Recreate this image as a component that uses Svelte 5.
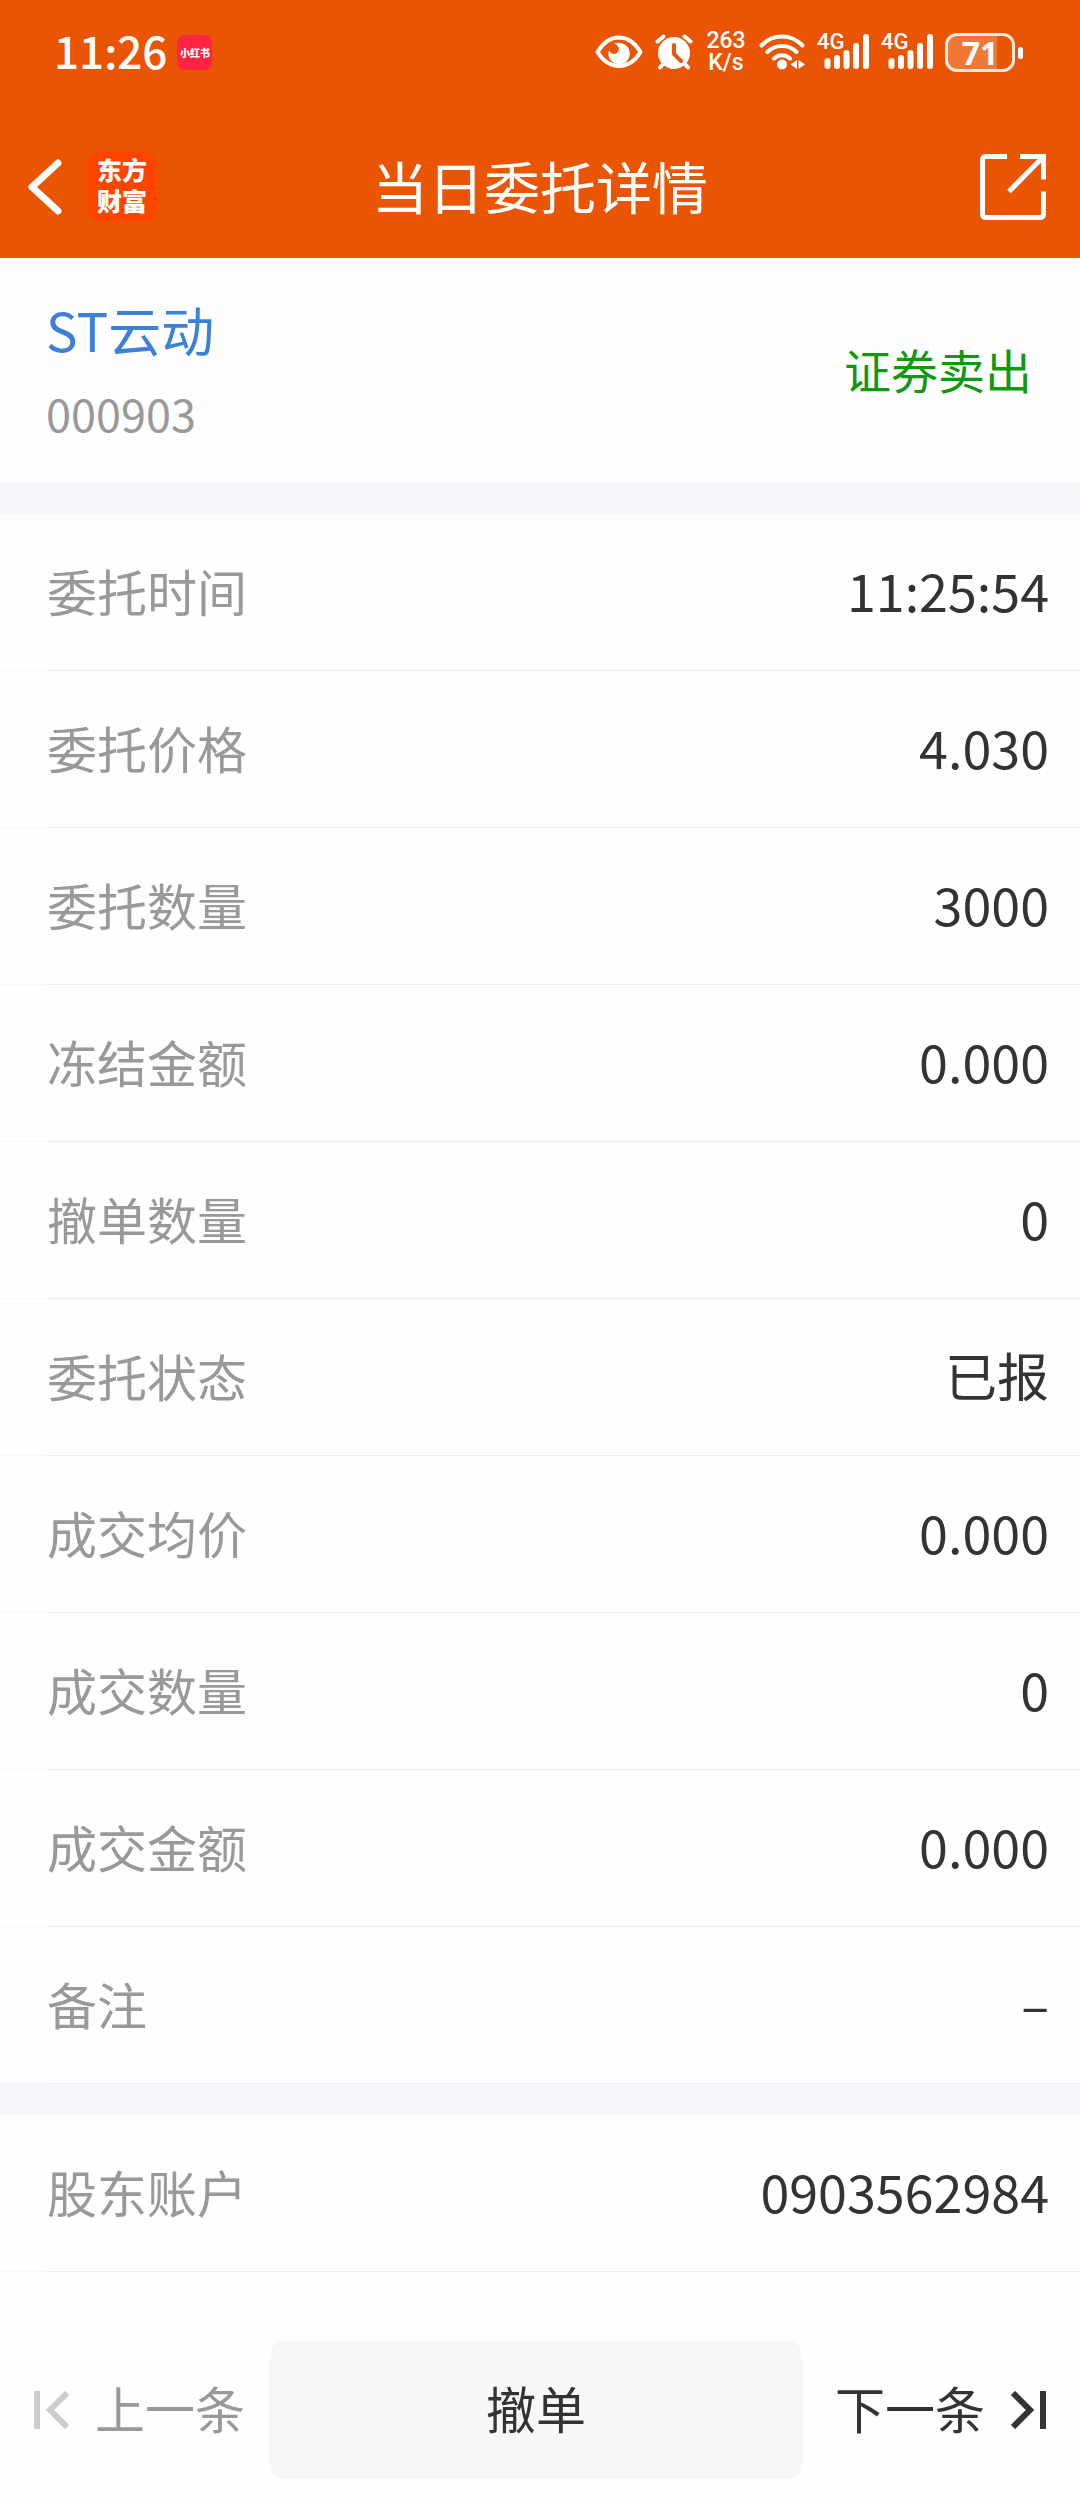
<script lang="ts">
  interface Row { label: string; value: string; }

  const order: Row[] = [
    { label: '委托时间', value: '11:25:54' },
    { label: '委托价格', value: '4.030' },
    { label: '委托数量', value: '3000' },
    { label: '冻结金额', value: '0.000' },
    { label: '撤单数量', value: '0' },
    { label: '委托状态', value: '已报' },
    { label: '成交均价', value: '0.000' },
    { label: '成交数量', value: '0' },
    { label: '成交金额', value: '0.000' },
    { label: '备注', value: '–' },
  ];
  const account: Row[] = [{ label: '股东账户', value: '0903562984' }];
</script>

{#snippet rows(items: Row[])}
  <dl class="rows">
    {#each items as { label, value }}
      <div class="row">
        <dt>{label}</dt>
        <dd>{value}</dd>
      </div>
    {/each}
  </dl>
{/snippet}

{#snippet signal()}
  <div class="signal">
    <span>4G</span>
    <svg width="52" height="36" viewBox="0 0 52 36" fill="none" stroke="#fff" stroke-width="6" stroke-linecap="round" aria-hidden="true">
      <path d="M10.500 27v5M20 24v8M29.500 19v13M39 12v20M49 3v29" />
    </svg>
  </div>
{/snippet}

<div class="page">
  <header>
    <div class="status">
      <time>11:26</time>
      <span class="red-app">小红书</span>
      <div class="indicators">
        <svg width="48" height="34" viewBox="0 0 48 34" aria-hidden="true">
          <path d="M2.500 17C8 8 15 2.500 24 2.500S40 8 45.500 17C40 26 33 31 24 31S8 26 2.500 17z" fill="none" stroke="#fff" stroke-width="4" stroke-linejoin="round" />
          <path d="M19 8.500c6-2 12 .5 14.500 5 2.600 5 1 10.500-2.500 13.500-3.500 2.700-10 2.700-13.500 0-3.600-3-5-7.500-3.500-11.500 2 3.500 6 4.500 8.500 2 2.700-2.700 1.500-7-3.500-9z" fill="#fff" />
        </svg>
        <svg width="38" height="36" viewBox="0 0 38 36" aria-hidden="true">
          <circle cx="19" cy="19" r="16" fill="#fff" />
          <path d="M2.500 7.500l6-5M35.500 7.500l-6-5M9 29l-4 4.500M29 29l4 4.500" stroke="#fff" stroke-width="4" stroke-linecap="round" />
          <path d="M19 11v9l7 7" fill="none" stroke="#ea5504" stroke-width="4" stroke-linecap="round" stroke-linejoin="round" />
        </svg>
        <div class="speed"><span>263</span><span>K/s</span></div>
        <svg width="46" height="36" viewBox="0 0 46 36" aria-hidden="true">
          <g fill="none" stroke="#fff" stroke-width="4" stroke-linecap="round">
            <path d="M2.500 11.500c11.500-12 29.500-12 41 0M8.500 18c8-8 21-8 29 0M15 24.500c4.500-4.500 11.500-4.500 16 0" />
          </g>
          <circle cx="23" cy="30.500" r="5" fill="#fff" />
          <path d="M38 26v9l-6.500-4.500zM39.500 26v9l6.500-4.500z" fill="#fff" />
        </svg>
        {@render signal()}
        {@render signal()}
        <div class="battery"><span>71</span></div>
      </div>
    </div>

    <nav>
      <div class="side">
        <button aria-label="返回">
          <svg width="34" height="56" viewBox="0 0 34 56" fill="none" stroke="#fff" stroke-width="7" stroke-linecap="round" stroke-linejoin="round">
            <path d="M30 4L4 28l26 24" />
          </svg>
        </button>
        <span class="logo"><span>东方</span><span>财富</span></span>
      </div>
      <h1>当日委托详情</h1>
      <div class="side end">
        <button aria-label="分享">
          <svg width="66" height="66" viewBox="0 0 66 66" fill="none" stroke="#fff" stroke-width="5">
            <path d="M27 2.500H5.500a3 3 0 0 0-3 3v55a3 3 0 0 0 3 3h55a3 3 0 0 0 3-3V37.500M40 2.500h23.500v23M63 3L29 37.500" />
          </svg>
        </button>
      </div>
    </nav>
  </header>

  <main>
    <section class="stock">
      <div>
        <a href="#stock">ST云动</a>
        <p>000903</p>
      </div>
      <strong>证券卖出</strong>
    </section>
    {@render rows(order)}
    {@render rows(account)}
  </main>

  <footer>
    <button class="step" disabled>
      <svg width="36" height="38" viewBox="0 0 36 38" fill="none" stroke="#ccc" stroke-width="6" aria-hidden="true">
        <path d="M3 0v38M33 2L16 19l17 17" />
      </svg>
      <span>上一条</span>
    </button>
    <button class="cancel"><span>撤单</span></button>
    <button class="step next">
      <span>下一条</span>
      <svg width="36" height="38" viewBox="0 0 36 38" fill="none" stroke="#333" stroke-width="6" aria-hidden="true">
        <path d="M33 0v38M3 2l17 17L3 36" />
      </svg>
    </button>
  </footer>
</div>

<style>
  :global(body) { margin: 0; background: #fff; }

  .page {
    display: flex;
    flex-direction: column;
    min-height: 100vh;
    background: #fefefe;
    color: #333;
    font-family: "Noto Sans CJK SC", sans-serif;
  }

  button {
    padding: 0;
    border: 0;
    background: none;
    color: inherit;
    font: inherit;
    cursor: pointer;
  }
  svg { display: block; flex: none; }

  header { background: #ea5504; color: #fff; }

  /* Phone status bar */
  .status {
    display: flex;
    align-items: center;
    height: 104px;
    padding: 0 58px 0 54px;
  }
  time { padding-bottom: 4px; font-size: 44px; font-weight: 500; line-height: 60px; }
  .red-app {
    width: 35px;
    margin-left: 10px;
    border-radius: 8px;
    background: #ff2442;
    font-size: 10px;
    font-weight: 900;
    line-height: 35px;
    text-align: center;
  }
  .indicators { display: flex; align-items: center; gap: 12px; margin-left: auto; }
  .speed {
    display: flex;
    flex-direction: column;
    align-items: center;
    width: 42px;
    font: 500 23px/22px Roboto, sans-serif;
  }
  .signal { position: relative; }
  .signal span {
    position: absolute;
    top: 0;
    left: 0;
    font: 500 22px/16px Roboto, sans-serif;
  }
  .battery {
    position: relative;
    box-sizing: border-box;
    width: 70px;
    height: 39px;
    margin-right: 7px;
    border: 3px solid #ffe9da;
    border-radius: 12px;
    background: linear-gradient(90deg, #f07837 77%, transparent 77%);
    font: 700 32px/33px "Noto Sans", sans-serif;
    text-align: center;
  }
  .battery::after {
    content: "";
    position: absolute;
    top: 11px;
    right: -11px;
    width: 5px;
    height: 12px;
    border-radius: 3px;
    background: #fff;
  }

  /* Title bar */
  nav {
    display: flex;
    align-items: center;
    box-sizing: border-box;
    height: 154px;
    padding: 12px 28px 0;
  }
  .side { display: flex; flex: 1 1 0; align-items: center; gap: 25px; box-sizing: border-box; }
  .end { justify-content: flex-end; }
  .end button { margin-right: 6px; }
  h1 { margin: 0; padding-bottom: 4px; font-size: 56px; font-weight: 400; line-height: 80px; }
  .logo {
    display: flex;
    flex-direction: column;
    justify-content: center;
    align-items: center;
    width: 70px;
    height: 70px;
    border-radius: 14px;
    background: #ff4400;
    font: 900 25px/31px "Liberation Sans", "Noto Sans CJK SC", sans-serif;
  }

  .stock {
    display: flex;
    align-items: center;
    justify-content: space-between;
    height: 225px;
    padding: 0 48px 0 46px;
    border-bottom: 31px solid #f6f7fa;
  }
  .stock a {
    display: block;
    color: #3c80d8;
    font-size: 53px;
    line-height: 84px;
    text-decoration: none;
  }
  .stock p { margin: 0; color: #999; font-size: 45px; line-height: 84px; }
  .stock strong { padding-bottom: 4px; color: #109910; font-size: 47px; font-weight: 400; }

  .rows { margin: 0; }
  .rows + .rows { border-top: 31px solid #f6f7fa; }
  /* The divider is fainter under the left inset */
  .row {
    display: flex;
    align-items: center;
    justify-content: space-between;
    box-sizing: border-box;
    height: 157px;
    padding: 0 31px 6px 47px;
    background: linear-gradient(90deg, #f7f8fa 47px, #ebedef 47px) bottom / 100% 1px no-repeat;
  }
  dt { color: #999; font-size: 50px; }
  dd { margin: 0; font-size: 52px; }

  footer {
    display: flex;
    align-items: center;
    margin-top: auto;
    padding: 0 34px 25px;
    font-size: 50px;
  }
  footer span { padding-bottom: 6px; }
  .step { display: flex; flex: none; align-items: center; gap: 25px; width: 236px; }
  .step:disabled { color: #999; cursor: default; }
  .next { justify-content: flex-end; width: 244px; }
  .cancel {
    display: flex;
    flex: 1;
    align-items: center;
    justify-content: center;
    height: 138px;
    border-radius: 14px;
    background: #f7f7fa;
  }
</style>
